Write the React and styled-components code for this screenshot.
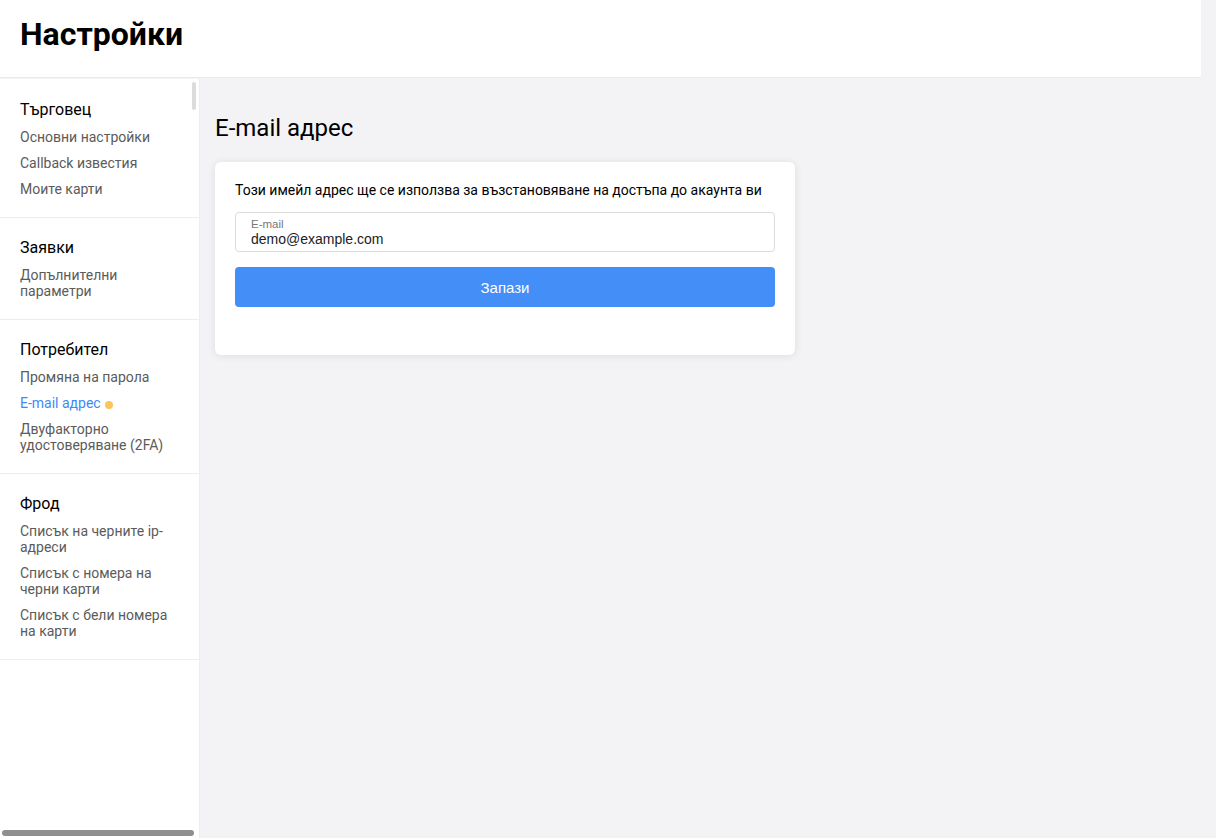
import styled, { createGlobalStyle } from 'styled-components';

const GlobalStyle = createGlobalStyle`
  html, body {
    margin: 0;
    padding: 0;
    background: #f3f3f5;
  }
  body {
    font-family: Roboto, "Noto Sans", sans-serif;
    color: #000;
  }
  * {
    box-sizing: border-box;
  }
`;

const Page = styled.div`
  display: flex;
  flex-direction: column;
  height: 838px;
  overflow: hidden;
  background: #f3f3f5;
`;

const Header = styled.header`
  width: calc(100% - 15px);
  height: 78px;
  flex: none;
  padding: 14px 0 0 20px;
  background: #fff;
  border-bottom: 1px solid #ebebed;
  margin-bottom: 1px;

  h1 {
    margin: 0;
    font-size: 32px;
    line-height: 40px;
    font-weight: 700;
  }
`;

const Body = styled.div`
  flex: 1;
  display: flex;
  min-height: 0;
`;

const Sidebar = styled.nav`
  position: relative;
  width: 200px;
  flex: none;
  padding-top: 1px;
  background: #fff;
  border-right: 1px solid #ededf0;
`;

const ScrollThumbY = styled.div`
  position: absolute;
  top: 3px;
  right: 3px;
  width: 4px;
  height: 28px;
  border-radius: 2px;
  background: #dcdcdc;
`;

const ScrollThumbX = styled.div`
  position: absolute;
  left: 2px;
  right: 5px;
  bottom: 2px;
  height: 6px;
  border-radius: 3px;
  background: #8f8f8f;
`;

const Section = styled.section`
  padding: 19px 20px 20px;
  border-bottom: 1px solid #ededf0;
`;

const SectionTitle = styled.div`
  font-size: 16px;
  line-height: 22px;
  color: #000;
`;

const NavItem = styled.a`
  display: block;
  max-width: 160px;
  margin-top: ${p => (p.$first ? '8px' : '10px')};
  font-size: 14px;
  line-height: 16px;
  color: ${p => (p.$active ? '#3d8af7' : '#5b5b5b')};
  text-decoration: none;
  cursor: pointer;
`;

const Dot = styled.span`
  display: inline-block;
  width: 8px;
  height: 8px;
  margin-left: 4px;
  border-radius: 50%;
  background: #fcc55a;
  vertical-align: -0.5px;
`;

const Main = styled.main`
  flex: 1;
  padding: 35px 15px 0;
`;

const Title = styled.h2`
  margin: 0 0 20px;
  font-size: 24px;
  line-height: 28px;
  font-weight: 400;
`;

const Card = styled.div`
  width: 580px;
  padding: 20px 20px 48px;
  background: #fff;
  border-radius: 6px;
  box-shadow: 0 1px 8px rgba(0, 0, 0, 0.09);
`;

const Hint = styled.p`
  margin: 0 0 14px;
  font-size: 14px;
  line-height: 16px;
`;

const Field = styled.label`
  display: flex;
  flex-direction: column;
  justify-content: center;
  height: 40px;
  padding: 1px 15px 0;
  border: 1px solid #dcdcdc;
  border-radius: 4px;
  font-family: "Liberation Sans", Arial, sans-serif;

  span {
    font-size: 11.5px;
    line-height: 12px;
    color: #777;
  }

  input {
    border: none;
    outline: none;
    padding: 0;
    font-family: inherit;
    font-size: 14px;
    line-height: 18px;
    color: #222;
    background: transparent;
  }
`;

const SaveButton = styled.button`
  display: block;
  width: 100%;
  height: 40px;
  margin-top: 15px;
  border: none;
  border-radius: 4px;
  background: #448ef8;
  color: #fff;
  font-family: "Liberation Sans", Arial, sans-serif;
  font-size: 15px;
  cursor: pointer;
`;

const sections = [
  { title: 'Търговец', items: ['Основни настройки', 'Callback известия', 'Моите карти'] },
  { title: 'Заявки', items: ['Допълнителни параметри'] },
  {
    title: 'Потребител',
    items: ['Промяна на парола', 'E-mail адрес', 'Двуфакторно удостоверяване (2FA)'],
  },
  {
    title: 'Фрод',
    items: [
      'Списък на черните ip-адреси',
      'Списък с номера на черни карти',
      'Списък с бели номера на карти',
    ],
  },
];

const App = () => {
  return (
    <>
      <GlobalStyle />
      <Page>
        <Header>
          <h1>Настройки</h1>
        </Header>
        <Body>
          <Sidebar>
            {sections.map(section => (
              <Section key={section.title}>
                <SectionTitle>{section.title}</SectionTitle>
                {section.items.map((item, i) => {
                  const active = item === 'E-mail адрес';
                  return (
                    <NavItem key={item} $first={i === 0} $active={active}>
                      {item}
                      {active && <Dot />}
                    </NavItem>
                  );
                })}
              </Section>
            ))}
            <ScrollThumbY />
            <ScrollThumbX />
          </Sidebar>
          <Main>
            <Title>E-mail адрес</Title>
            <Card>
              <Hint>
                Този имейл адрес ще се използва за възстановяване на достъпа до акаунта ви
              </Hint>
              <Field>
                <span>E-mail</span>
                <input type="email" defaultValue="demo@example.com" />
              </Field>
              <SaveButton>Запази</SaveButton>
            </Card>
          </Main>
        </Body>
      </Page>
    </>
  );
};

export default App;
